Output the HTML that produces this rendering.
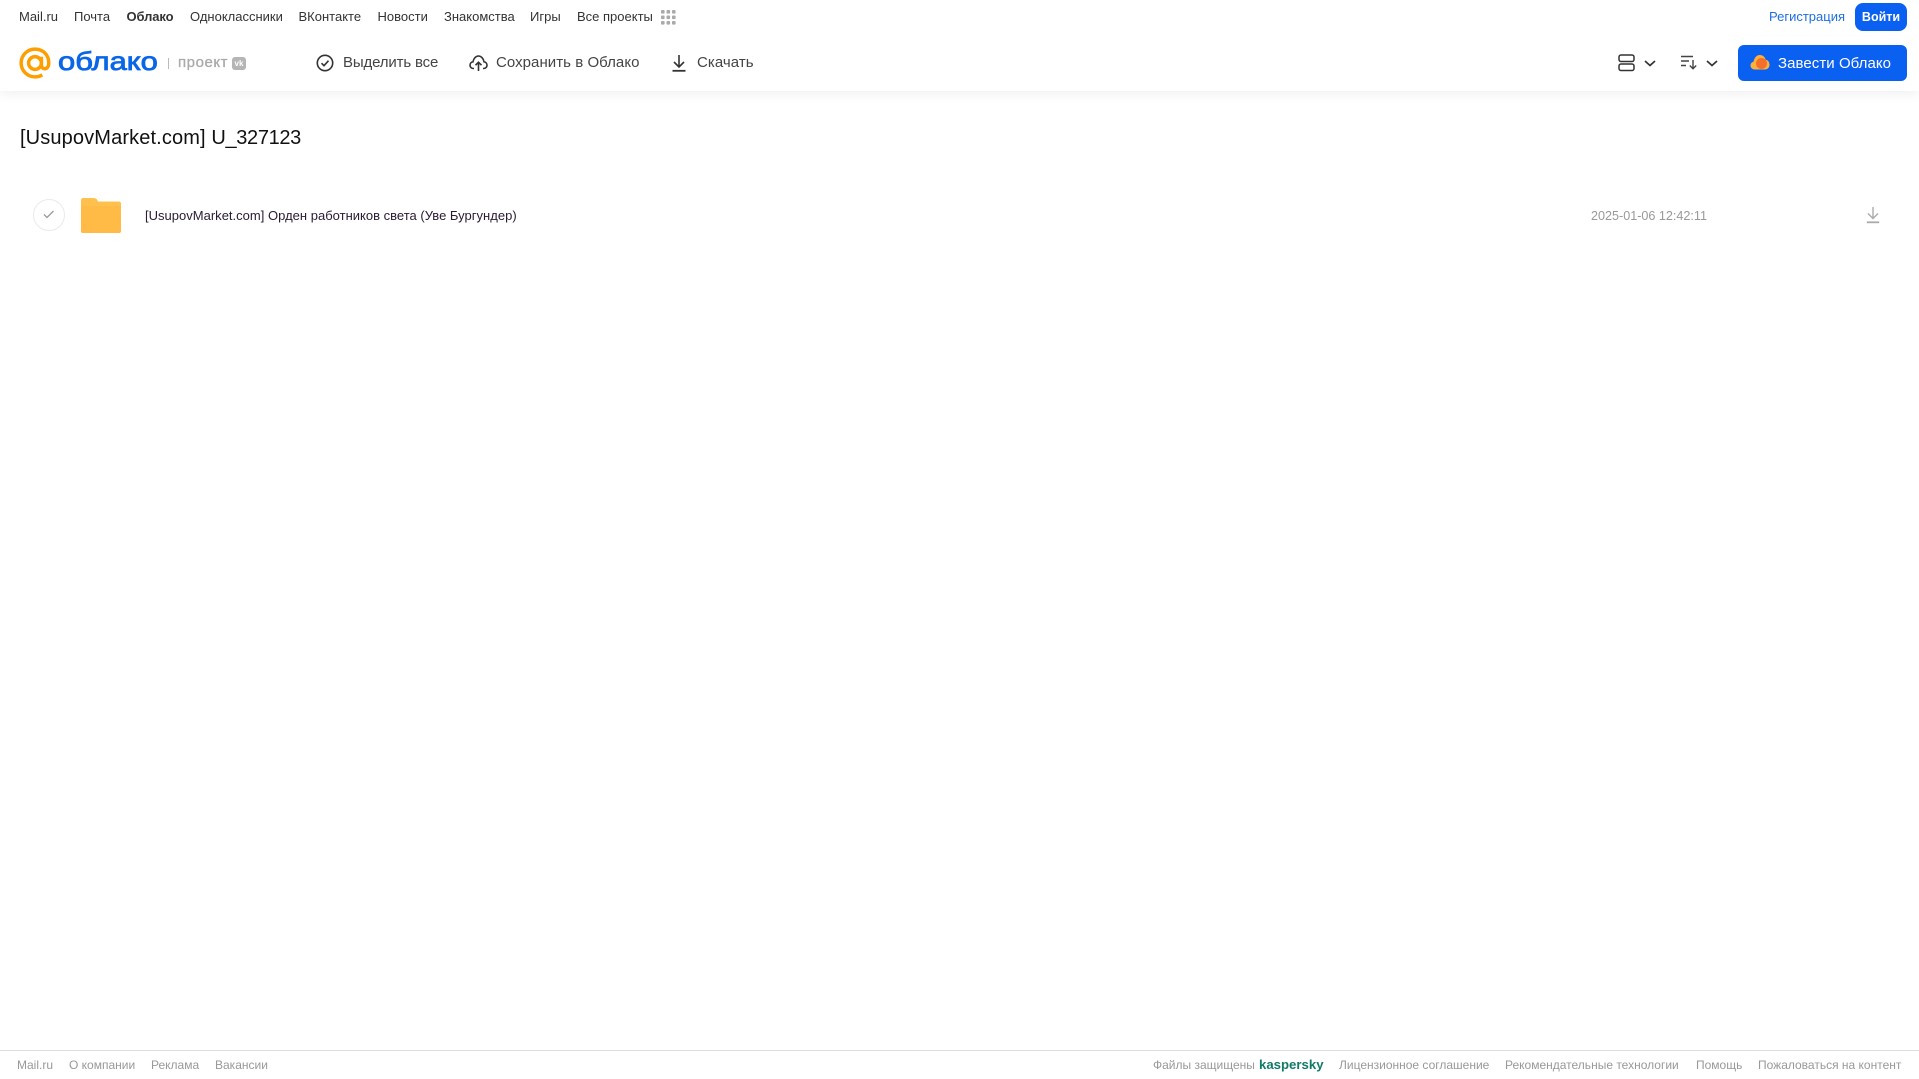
<!DOCTYPE html>
<html lang="ru">
<head>
<meta charset="utf-8">
<title>Облако</title>
<style>
html,body{margin:0;padding:0;background:#fff;}
body{width:1919px;height:1079px;position:relative;overflow:hidden;font-family:"Liberation Sans",Arial,sans-serif;}
.t{position:absolute;white-space:nowrap;line-height:20px;}
.n{top:7px;font-size:13px;color:#333;}
.b{top:53px;font-size:15px;color:#444;letter-spacing:.05px;}
.f{top:1055px;font-size:12px;color:#999;}
svg{position:absolute;overflow:visible;}
#hd{position:absolute;left:0;top:0;width:1919px;height:91px;background:#fff;box-shadow:0 2px 12px rgba(0,0,0,.07);}
</style>
</head>
<body>
<div id="hd"></div>

<span class="t n" style="left:19px">Mail.ru</span>
<span class="t n" style="left:74px">Почта</span>
<span class="t n" style="left:126.500px;font-weight:bold;letter-spacing:-.1px">Облако</span>
<span class="t n" style="left:190px">Одноклассники</span>
<span class="t n" style="left:298.500px">ВКонтакте</span>
<span class="t n" style="left:377.500px">Новости</span>
<span class="t n" style="left:444px">Знакомства</span>
<span class="t n" style="left:530px">Игры</span>
<span class="t n" style="left:577px">Все проекты</span>
<svg style="left:661px;top:10px" width="15" height="15" fill="#aaa"><rect x="0" y="0" width="3.6" height="3.6" rx="1"/><rect x="5.5" y="0" width="3.6" height="3.6" rx="1"/><rect x="11" y="0" width="3.6" height="3.6" rx="1"/><rect x="0" y="5.5" width="3.6" height="3.6" rx="1"/><rect x="5.5" y="5.5" width="3.6" height="3.6" rx="1"/><rect x="11" y="5.5" width="3.6" height="3.6" rx="1"/><rect x="0" y="11" width="3.6" height="3.6" rx="1"/><rect x="5.5" y="11" width="3.6" height="3.6" rx="1"/><rect x="11" y="11" width="3.6" height="3.6" rx="1"/></svg>

<span class="t" style="left:1769px;top:7px;font-size:13px;color:#1f6fe0">Регистрация</span>
<div style="position:absolute;left:1855px;top:3px;width:52px;height:28px;border-radius:8px;background:#0a60f0;color:#fff;font-size:12.500px;font-weight:bold;text-align:center;line-height:28px">Войти</div>

<svg style="left:19px;top:47px" width="32" height="32" viewBox="0 0 33 33" fill="none" stroke="#ff9e00" stroke-width="3.600"><circle cx="16.5" cy="16.5" r="6.6"/><path d="M23.1 10v8.5c0 5.5 7.4 5.5 7.6-1.5C31 8 24.5 2.2 16.5 2.2 8.6 2.2 2.2 8.6 2.2 16.5s6.4 14.3 14.3 14.3c3 0 5.400-.8 7.500-2.100"/></svg>
<span class="t" style="left:58px;top:43px;font-size:26px;line-height:36px;color:#0a66e8;-webkit-text-stroke:.8px #0a66e8;transform:scaleX(1.190);transform-origin:0 50%">облако</span>
<div style="position:absolute;left:168px;top:58px;width:1px;height:11px;background:#bbb"></div>
<span class="t" style="left:178px;top:53px;font-size:15px;color:#aaa;-webkit-text-stroke:.3px #aaa;letter-spacing:.55px">проект</span>
<div style="position:absolute;left:232px;top:57px;width:14px;height:13px;border-radius:3px;background:#b5b5b5;color:#fff;font-size:8px;font-weight:bold;line-height:13px;text-align:center">vk</div>

<svg style="left:316px;top:54px" width="18" height="18" viewBox="0 0 18 18" fill="none" stroke="#333" stroke-width="1.600"><circle cx="9" cy="9" r="7.700"/><path d="M5.500 9.200l2.500 2.500 4.500-5"/></svg>
<span class="t b" style="left:343px;letter-spacing:-.15px">Выделить все</span>

<svg style="left:469px;top:54px" width="19" height="18" viewBox="0 0 19 18" fill="none" stroke="#333" stroke-width="1.600"><path d="M5 14.500H4.500C2.500 14.500 1 13 1 11.200c0-1.800 1.300-3.200 3-3.400C4.500 4.500 6.800 2 9.500 2s5 2.500 5.500 5.800c1.700.2 3 1.600 3 3.400 0 1.800-1.500 3.300-3.500 3.300H14"/><path d="M9.500 17V8.500M6.500 11.200l3-3 3 3"/></svg>
<span class="t b" style="left:496px">Сохранить в Облако</span>

<svg style="left:671px;top:54px" width="16" height="18" viewBox="0 0 16 18" fill="none" stroke="#333" stroke-width="1.600"><path d="M8 1v11.500M3 8l5 5 5-5"/><path d="M1.500 16.800h13" stroke-width="1.800"/></svg>
<span class="t b" style="left:697px">Скачать</span>

<svg style="left:1618px;top:54px" width="17" height="18" viewBox="0 0 17 18" fill="none" stroke="#333" stroke-width="1.500"><rect x="1" y="1" width="15" height="6.500" rx="2"/><rect x="1" y="10" width="15" height="6.500" rx="2"/></svg>
<svg style="left:1644px;top:60px" width="12" height="7" fill="none" stroke="#333" stroke-width="1.700"><path d="M1 1l5 4.500L11 1"/></svg>
<svg style="left:1681px;top:55px" width="17" height="15" viewBox="0 0 17 15" fill="none" stroke="#444" stroke-width="1.400"><path d="M0 1.500h12M0 6h8M0 10.500h5M12 5v8.500M8.800 10.500l3.200 3.200 3.200-3.200"/></svg>
<svg style="left:1706px;top:60px" width="12" height="7" fill="none" stroke="#333" stroke-width="1.700"><path d="M1 1l5 4.500L11 1"/></svg>

<div style="position:absolute;left:1738px;top:45px;width:169px;height:36px;border-radius:6px;background:#0a60f0"></div>
<svg style="left:1750px;top:54px" width="20" height="17" viewBox="0 0 20 17"><path d="M5 15.500C2.500 15.500.5 13.800.5 11.500c0-2 1.400-3.500 3-3.800C4.200 4 6.500 1 9.800 1c3 0 5.200 2 5.900 4.800 2.300.3 3.800 2.500 3.800 5 0 2.800-2 4.700-4.500 4.700z" fill="#ffb03a"/><circle cx="11.500" cy="9.500" r="5.500" fill="#f4702a"/></svg>
<span class="t" style="left:1778px;top:54px;font-size:15px;color:#fff;letter-spacing:.06px">Завести Облако</span>

<span class="t" style="left:20px;top:125px;font-size:20px;line-height:26px;color:#111;letter-spacing:.13px">[UsupovMarket.com] <span style="letter-spacing:-.35px">U_327123</span></span>

<div style="position:absolute;left:33px;top:199px;width:30px;height:30px;border:1px solid #eaeaea;border-radius:50%"></div>
<svg style="left:43px;top:210px" width="12" height="9" fill="none" stroke="#999" stroke-width="1.300"><path d="M1 4.500l3 3 6.500-6.500"/></svg>
<svg style="left:81px;top:198px" width="40" height="35" viewBox="0 0 40 35"><path d="M2 0h10c3 0 4 1 5 3.500H38c1 0 2 1 2 2V33c0 1-1 2-2 2H2c-1 0-2-1-2-2V2c0-1 1-2 2-2z" fill="#ffc04d"/><rect x="0" y="8" width="40" height="27" rx="2" fill="#ffbb45"/></svg>
<span class="t" style="left:145px;top:206px;font-size:13px;color:#2a1a33;letter-spacing:.01px">[UsupovMarket.com] Орден работников света (Уве Бургундер)</span>

<span class="t" style="left:1591px;top:206px;font-size:12.600px;color:#999">2025-01-06 12:42:11</span>
<svg style="left:1866px;top:206px" width="14" height="18" viewBox="0 0 14 18" fill="none" stroke="#aaa" stroke-width="1.400"><path d="M7 1v11M2 7.500l5 5 5-5"/><path d="M.8 16.300h12.400" stroke-width="1.800"/></svg>

<div style="position:absolute;left:0;top:1050px;width:1919px;height:1px;background:#ddd"></div>
<span class="t f" style="left:17px">Mail.ru</span>
<span class="t f" style="left:69px">О компании</span>
<span class="t f" style="left:151px">Реклама</span>
<span class="t f" style="left:215px">Вакансии</span>
<span class="t f" style="left:1153px">Файлы защищены</span>
<span class="t" style="left:1259px;top:1055px;font-size:13.200px;font-weight:bold;color:#107a68">kaspersky</span>
<span class="t f" style="left:1339px">Лицензионное соглашение</span>
<span class="t f" style="left:1505px">Рекомендательные технологии</span>
<span class="t f" style="left:1696px">Помощь</span>
<span class="t f" style="left:1758px">Пожаловаться на контент</span>
</body>
</html>
